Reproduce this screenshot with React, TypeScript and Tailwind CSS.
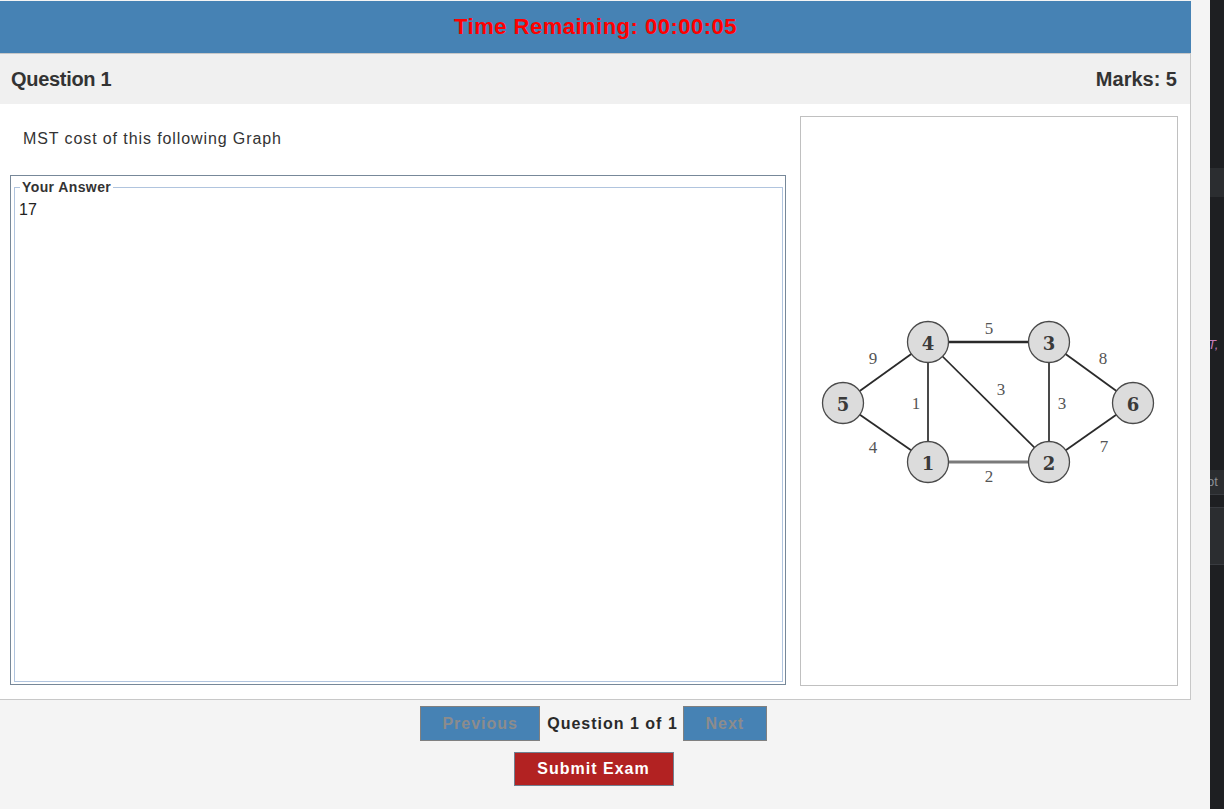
import React from "react";

const nodes: { id: string; x: number; y: number }[] = [
  { id: "4", x: 928, y: 342 },
  { id: "3", x: 1049, y: 342 },
  { id: "5", x: 843, y: 403 },
  { id: "6", x: 1133, y: 403 },
  { id: "1", x: 928, y: 462 },
  { id: "2", x: 1049, y: 462 },
];

const pos = (id: string) => nodes.find((n) => n.id === id)!;

const edges: { a: string; b: string; w: number; c: string }[] = [
  { a: "4", b: "3", w: 2.6, c: "#2a2a2a" },
  { a: "1", b: "2", w: 2.8, c: "#7a7a7a" },
  { a: "5", b: "4", w: 1.8, c: "#2a2a2a" },
  { a: "5", b: "1", w: 1.8, c: "#2a2a2a" },
  { a: "4", b: "1", w: 1.7, c: "#2a2a2a" },
  { a: "4", b: "2", w: 1.7, c: "#2a2a2a" },
  { a: "3", b: "2", w: 1.7, c: "#2a2a2a" },
  { a: "3", b: "6", w: 1.8, c: "#2a2a2a" },
  { a: "2", b: "6", w: 1.8, c: "#2a2a2a" },
];

const labels: { t: string; x: number; y: number }[] = [
  { t: "5", x: 989, y: 328 },
  { t: "9", x: 873, y: 358 },
  { t: "8", x: 1103, y: 358 },
  { t: "1", x: 916, y: 403 },
  { t: "3", x: 1001, y: 389 },
  { t: "3", x: 1062, y: 403 },
  { t: "4", x: 873, y: 447 },
  { t: "7", x: 1104, y: 446 },
  { t: "2", x: 989, y: 476 },
];

function Graph() {
  return (
    <svg width="376" height="568" viewBox="801 117 376 568" className="block">
      {edges.map((e, i) => {
        const a = pos(e.a);
        const b = pos(e.b);
        return (
          <line key={i} x1={a.x} y1={a.y} x2={b.x} y2={b.y} stroke={e.c} strokeWidth={e.w} />
        );
      })}
      {nodes.map((n) => (
        <g key={n.id}>
          <circle cx={n.x} cy={n.y} r={20.5} fill="#dcdcdc" stroke="#4a4a4a" strokeWidth={1.3} />
          <text
            x={n.x}
            y={n.y + 1}
            textAnchor="middle"
            dominantBaseline="central"
            fontFamily="'DejaVu Serif', 'Liberation Serif', serif"
            fontWeight="bold"
            fontSize="18"
            fill="#3a3a3a"
          >
            {n.id}
          </text>
        </g>
      ))}
      {labels.map((l, i) => (
        <text
          key={i}
          x={l.x}
          y={l.y}
          textAnchor="middle"
          dominantBaseline="central"
          fontFamily="'Liberation Serif', serif"
          fontSize="17"
          fill="#555"
        >
          {l.t}
        </text>
      ))}
    </svg>
  );
}

export default function App() {
  return (
    <div className="flex w-[1224px] h-[809px] bg-[#f4f4f4] overflow-hidden font-['Liberation_Sans',Arial,sans-serif] text-[#333]">
      <div className="w-[1210px] flex-none pt-[1px]">
        <div className="w-[1191px] h-[52px] bg-[#4682b4] flex items-center justify-center">
          <span className="text-[22px] font-bold tracking-[0.5px] text-[#ff0000] leading-none">
            Time Remaining: 00:00:05
          </span>
        </div>
        <div className="w-[1191px] border-t border-r border-b border-[#c8c8c8] bg-white">
          <div className="h-[50px] bg-[#f0f0f0] flex items-center justify-between pl-[11px] pr-[13px] text-[20px] font-bold text-[#333]">
            <span className="tracking-[-0.3px]">Question 1</span>
            <span>Marks: 5</span>
          </div>
          <div className="flex pt-[12px] pb-[13px] pl-[10px] gap-[14px]">
            <div className="w-[776px] flex flex-col">
              <div className="mt-[11px] pl-[13px] text-[16px] leading-[24px] tracking-[0.9px] text-[#333]">
                MST cost of this following Graph
              </div>
              <div className="mt-[24px] h-[510px] border border-[#778899] pt-[3px] pl-[3px] pr-[2px] pb-[2px]">
                <fieldset className="h-full border border-[#b0c4de] pl-[4px]">
                  <legend className="ml-[1px] px-[2px] text-[14px] font-bold leading-[16px] tracking-[0.4px] text-[#333]">
                    Your Answer
                  </legend>
                  <div className="pt-[5px] text-[16px] leading-[20px] text-[#222]">17</div>
                </fieldset>
              </div>
            </div>
            <div className="w-[378px] h-[570px] border border-[#c0c0c0] bg-white">
              <Graph />
            </div>
          </div>
        </div>
        <div className="w-[1187px] flex flex-col items-center pt-[6px]">
          <div className="flex items-center">
            <button className="w-[120px] h-[35px] bg-[#4682b4] border border-[#808080] text-[#8c8c8c] font-bold text-[16px] tracking-[1px]">
              Previous
            </button>
            <span className="ml-[7px] mr-[5px] text-[16px] font-bold tracking-[1px] text-[#2a2a2a]">
              Question 1 of 1
            </span>
            <button className="w-[84px] h-[35px] bg-[#4682b4] border border-[#808080] text-[#8c8c8c] font-bold text-[16px] tracking-[1px]">
              Next
            </button>
          </div>
          <button className="mt-[11px] w-[160px] h-[34px] bg-[#b22222] border border-[#708090] text-white font-bold text-[16px] tracking-[1px]">
            Submit Exam
          </button>
        </div>
      </div>
      <div className="flex-1 bg-[#1e1f22] flex flex-col overflow-hidden">
        <div className="h-[168px] flex-none" />
        <div className="h-[29px] flex-none bg-[#2b2d30]" />
        <div className="h-[140px] flex-none" />
        <div className="h-[16px] flex-none text-[13px] leading-[16px] italic text-[#c77dbb] whitespace-nowrap -ml-[2px]">
          T,
        </div>
        <div className="h-[117px] flex-none" />
        <div className="h-[24px] flex-none bg-[#2b2d30] text-[13px] leading-[24px] text-[#8b8e94] whitespace-nowrap -ml-[3px]">
          ot
        </div>
        <div className="h-[1px] flex-none bg-[#393b40]" />
        <div className="h-[12px] flex-none" />
        <div className="h-[1px] flex-none bg-[#393b40]" />
        <div className="h-[56px] flex-none bg-[#2b2d30]" />
        <div className="h-[1px] flex-none bg-[#393b40]" />
      </div>
    </div>
  );
}
